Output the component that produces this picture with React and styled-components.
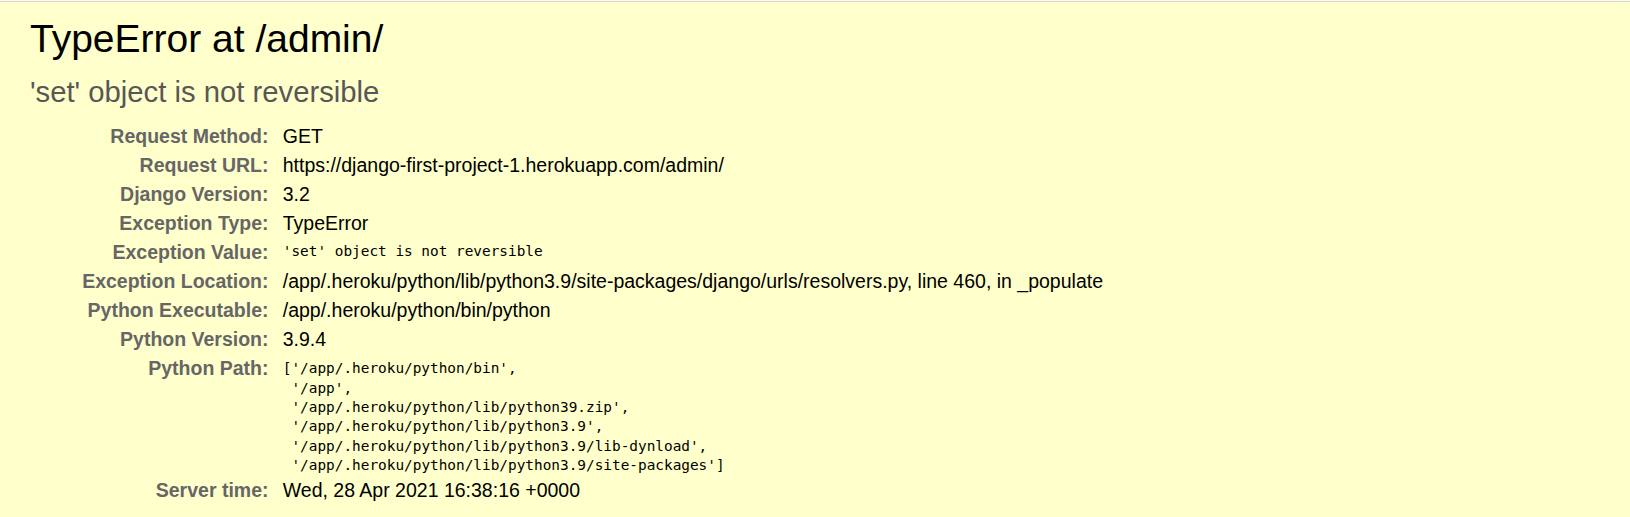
import React from 'react';
import styled, { createGlobalStyle } from 'styled-components';

const GlobalStyle = createGlobalStyle`
  html, body {
    margin: 0;
    padding: 0;
    background: #ffc;
  }
  body {
    font-family: "Liberation Sans", Arial, sans-serif;
    color: #000;
  }
`;

const TopRule = styled.div`
  height: 1px;
  background: #d8d8d8;
  border-top: 1px solid #fafaf0;
`;

const Summary = styled.div`
  background: #ffc;
  padding: 14px 30px 30px 30px;
`;

const Title = styled.h1`
  margin: 0;
  font-size: 39px;
  line-height: 45px;
  font-weight: normal;
`;

const ExceptionValue = styled.pre`
  margin: 15px 0 12px 0;
  font-family: "Liberation Sans", Arial, sans-serif;
  font-size: 29.25px;
  line-height: 33.6px;
  color: #575757;
  white-space: pre-wrap;
`;

const Meta = styled.table`
  border: none;
  border-collapse: collapse;
  background: transparent;
  width: 100%;
`;

const Label = styled.th`
  width: 234px;
  padding: 3px 9.75px 3px 4.5px;
  text-align: right;
  vertical-align: top;
  color: #666;
  font-weight: bold;
  font-size: 19.5px;
  line-height: 23.1px;
`;

const Value = styled.td`
  padding: 3px 4.5px;
  vertical-align: top;
  font-size: 19.5px;
  line-height: 23.1px;
`;

const Mono = styled.pre`
  margin: 0 0 ${props => props.$trim || 0}px 0;
  padding-top: ${props => props.$offset || 0}px;
  font-family: "DejaVu Sans Mono", "Liberation Mono", monospace;
  font-size: 14.4px;
  line-height: 19.3px;
  white-space: pre-wrap;
`;

const pythonPath = `['/app/.heroku/python/bin',
 '/app',
 '/app/.heroku/python/lib/python39.zip',
 '/app/.heroku/python/lib/python3.9',
 '/app/.heroku/python/lib/python3.9/lib-dynload',
 '/app/.heroku/python/lib/python3.9/site-packages']`;

const rows = [
  ['Request Method:', 'GET'],
  ['Request URL:', 'https://django-first-project-1.herokuapp.com/admin/'],
  ['Django Version:', '3.2'],
  ['Exception Type:', 'TypeError'],
  ['Exception Value:', <Mono $offset={1}>'set' object is not reversible</Mono>],
  ['Exception Location:', '/app/.heroku/python/lib/python3.9/site-packages/django/urls/resolvers.py, line 460, in _populate'],
  ['Python Executable:', '/app/.heroku/python/bin/python'],
  ['Python Version:', '3.9.4'],
  ['Python Path:', <Mono $offset={2} $trim={-2}>{pythonPath}</Mono>],
  ['Server time:', 'Wed, 28 Apr 2021 16:38:16 +0000'],
];

const App = () => (
  <>
    <GlobalStyle />
    <TopRule />
    <Summary>
      <Title>TypeError at /admin/</Title>
      <ExceptionValue>'set' object is not reversible</ExceptionValue>
      <Meta>
        <tbody>
          {rows.map(([label, value]) => (
            <tr key={label}>
              <Label>{label}</Label>
              <Value>{value}</Value>
            </tr>
          ))}
        </tbody>
      </Meta>
    </Summary>
  </>
);

export default App;
